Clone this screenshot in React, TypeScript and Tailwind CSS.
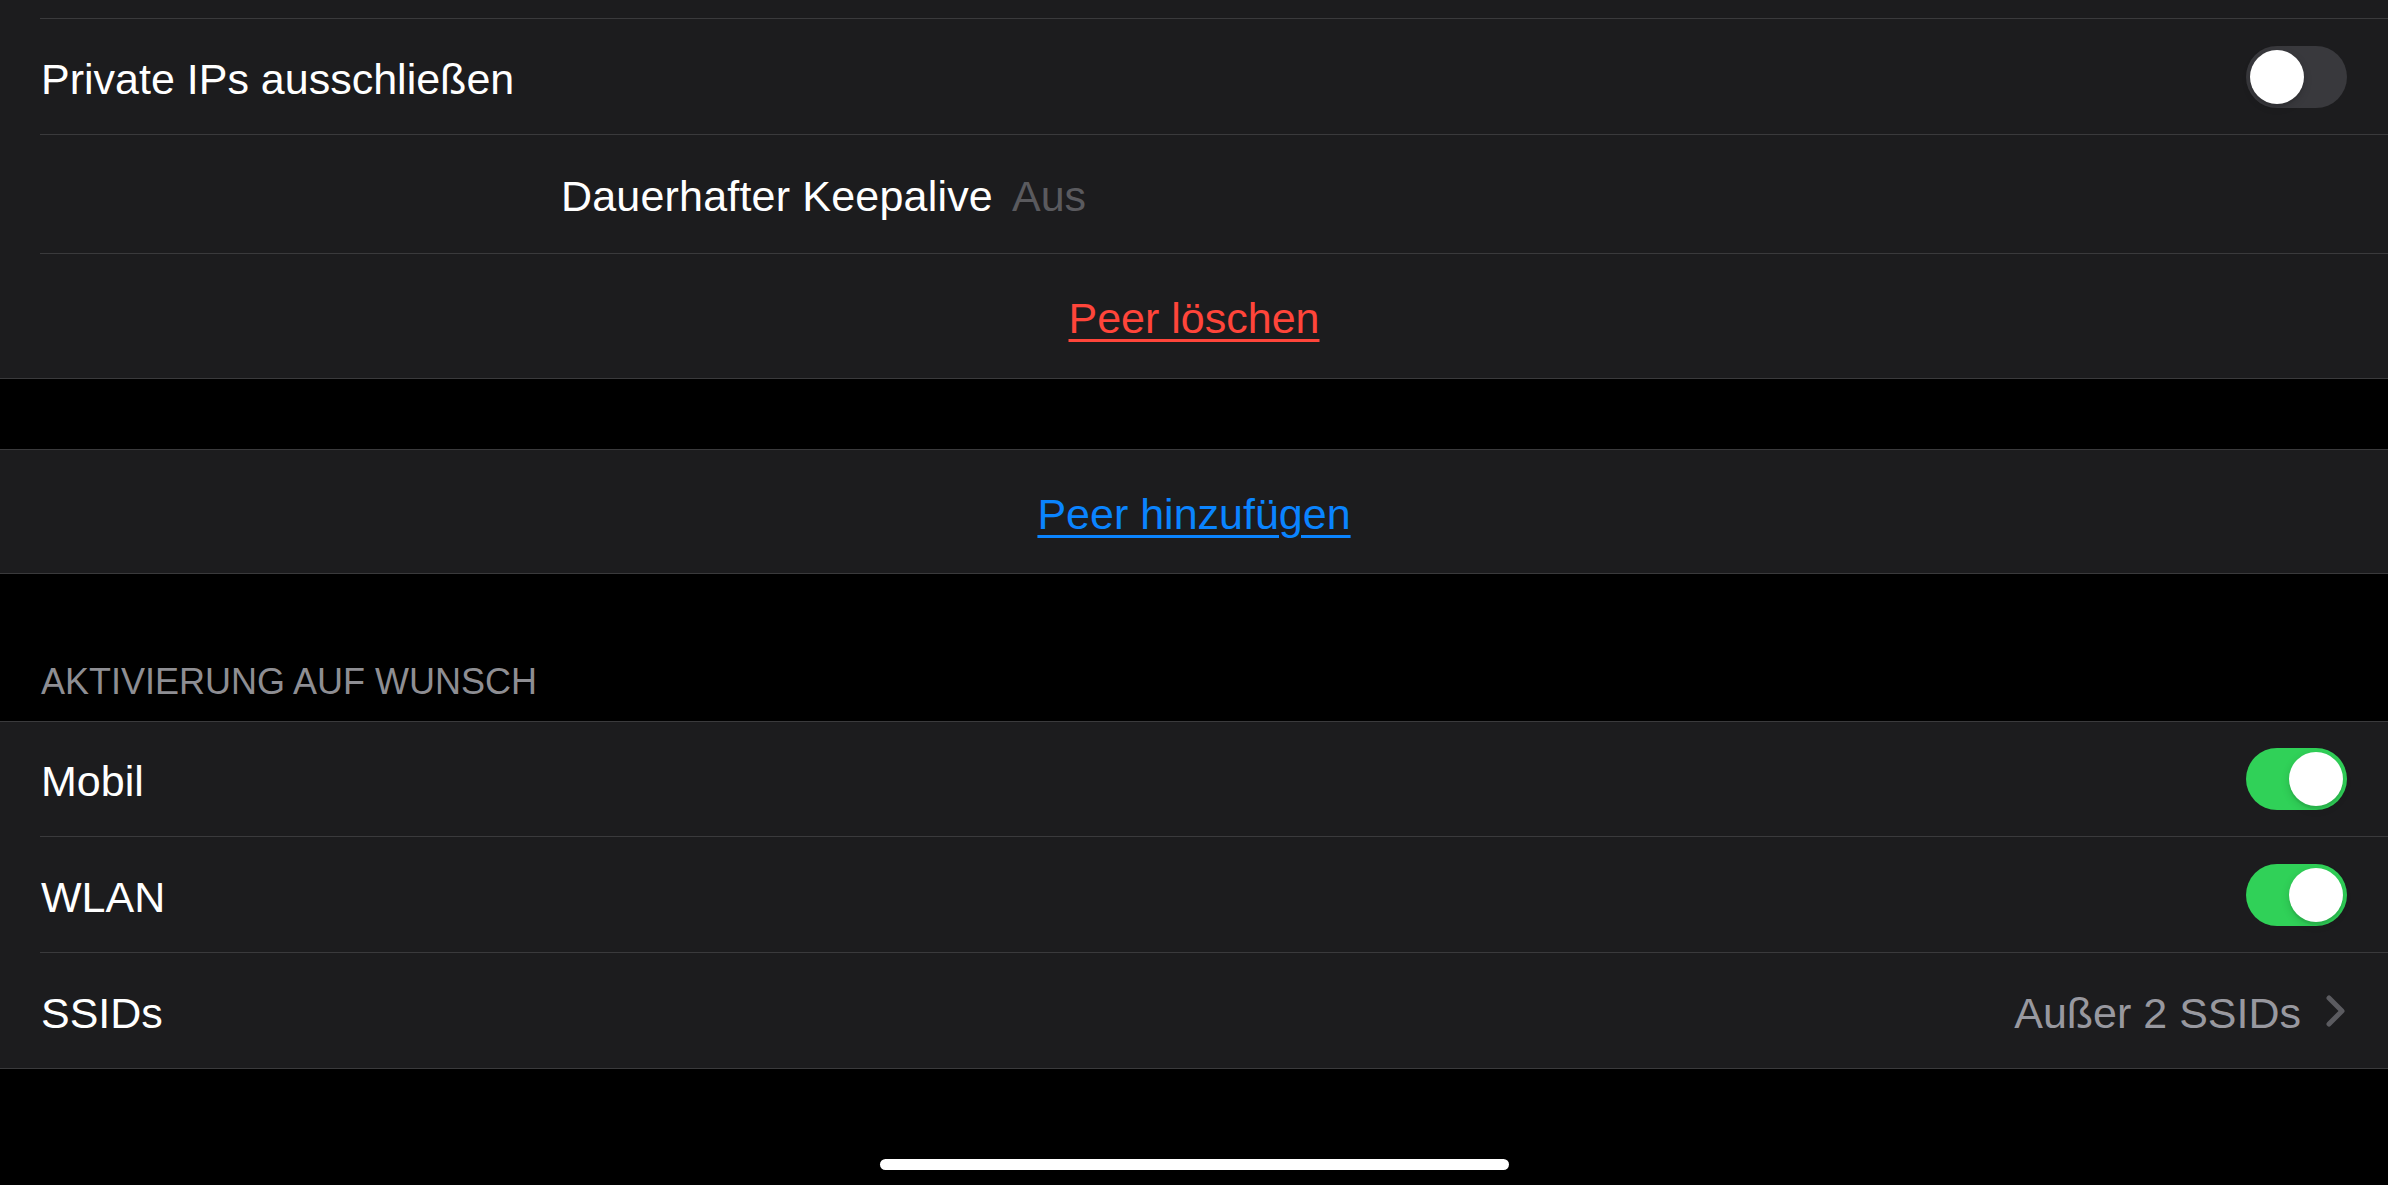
import React from "react";

function Toggle({ on }: { on: boolean }) {
  return (
    <div
      className={
        on
          ? "relative w-[101px] h-[62px] rounded-full bg-[#30d158] shrink-0"
          : "relative w-[101px] h-[62px] rounded-full bg-[#39393d] shrink-0"
      }
    >
      <div
        className={
          on
            ? "absolute top-[4px] right-[4px] w-[54px] h-[54px] rounded-full bg-white shadow-[0_3px_8px_rgba(0,0,0,0.15),0_3px_1px_rgba(0,0,0,0.06)]"
            : "absolute top-[4px] left-[4px] w-[54px] h-[54px] rounded-full bg-white shadow-[0_3px_8px_rgba(0,0,0,0.15),0_3px_1px_rgba(0,0,0,0.06)]"
        }
      />
    </div>
  );
}

function Sep() {
  return <div className="ml-[40px] h-px bg-[#3a3a3c]" />;
}

function GroupBorder() {
  return <div className="h-px bg-[#3a3a3c]" />;
}

export default function App() {
  return (
    <div className="w-full h-[1185px] bg-black overflow-hidden flex flex-col font-['Liberation_Sans','Arial',sans-serif] text-white">
      {/* Group 1 */}
      <div className="bg-[#1c1c1e]">
        <div className="h-[18px]" />
        <Sep />
        <div className="h-[115px] flex items-center justify-between pl-[41px] pr-[41px]">
          <span className="pt-[5px] text-[43px] leading-none">Private IPs ausschließen</span>
          <Toggle on={false} />
        </div>
        <Sep />
        <div className="h-[118px] flex items-center pl-[41px] pr-[41px]">
          <span className="pt-[5px] w-[952px] text-right text-[43px] leading-none tracking-[0.2px]">Dauerhafter Keepalive</span>
          <span className="pt-[5px] ml-[19px] text-[43px] leading-none text-[#5a5a5e]">Aus</span>
        </div>
        <Sep />
        <div className="h-[124px] flex items-center justify-center">
          <span className="pt-[5px] text-[43px] leading-none text-[#ff453a] underline decoration-[3px] underline-offset-[6px]">
            Peer löschen
          </span>
        </div>
        <GroupBorder />
      </div>

      <div className="h-[70px]" />

      {/* Group 2 */}
      <GroupBorder />
      <div className="bg-[#1c1c1e] h-[123px] flex items-center justify-center">
        <span className="pt-[5px] text-[43px] leading-none text-[#0a84ff] underline decoration-[3px] underline-offset-[6px]">
          Peer hinzufügen
        </span>
      </div>
      <GroupBorder />

      {/* Section header */}
      <div className="pt-[90px] pb-[21px] pl-[41px]">
        <span className="block text-[36px] leading-none text-[#8e8e93]">AKTIVIERUNG AUF WUNSCH</span>
      </div>

      {/* Group 3 */}
      <GroupBorder />
      <div className="bg-[#1c1c1e]">
        <div className="h-[114px] flex items-center justify-between pl-[41px] pr-[41px]">
          <span className="pt-[5px] text-[43px] leading-none">Mobil</span>
          <Toggle on={true} />
        </div>
        <Sep />
        <div className="h-[115px] flex items-center justify-between pl-[41px] pr-[41px]">
          <span className="pt-[5px] text-[43px] leading-none">WLAN</span>
          <Toggle on={true} />
        </div>
        <Sep />
        <div className="h-[115px] flex items-center justify-between pl-[41px] pr-[42px]">
          <span className="pt-[5px] text-[43px] leading-none">SSIDs</span>
          <div className="flex items-center gap-[25px]">
            <span className="pt-[5px] text-[43px] leading-none text-[#98989f]">Außer 2 SSIDs</span>
            <svg width="20" height="32" viewBox="0 0 20 32" fill="none">
              <polyline
                points="3,3 16,16 3,29"
                stroke="#5b5b60"
                strokeWidth="5"
                strokeLinecap="round"
                strokeLinejoin="round"
              />
            </svg>
          </div>
        </div>
      </div>
      <GroupBorder />

      {/* Home indicator */}
      <div className="flex-1 flex items-end justify-center pb-[15px]">
        <div className="w-[629px] h-[11px] rounded-full bg-white" />
      </div>
    </div>
  );
}
